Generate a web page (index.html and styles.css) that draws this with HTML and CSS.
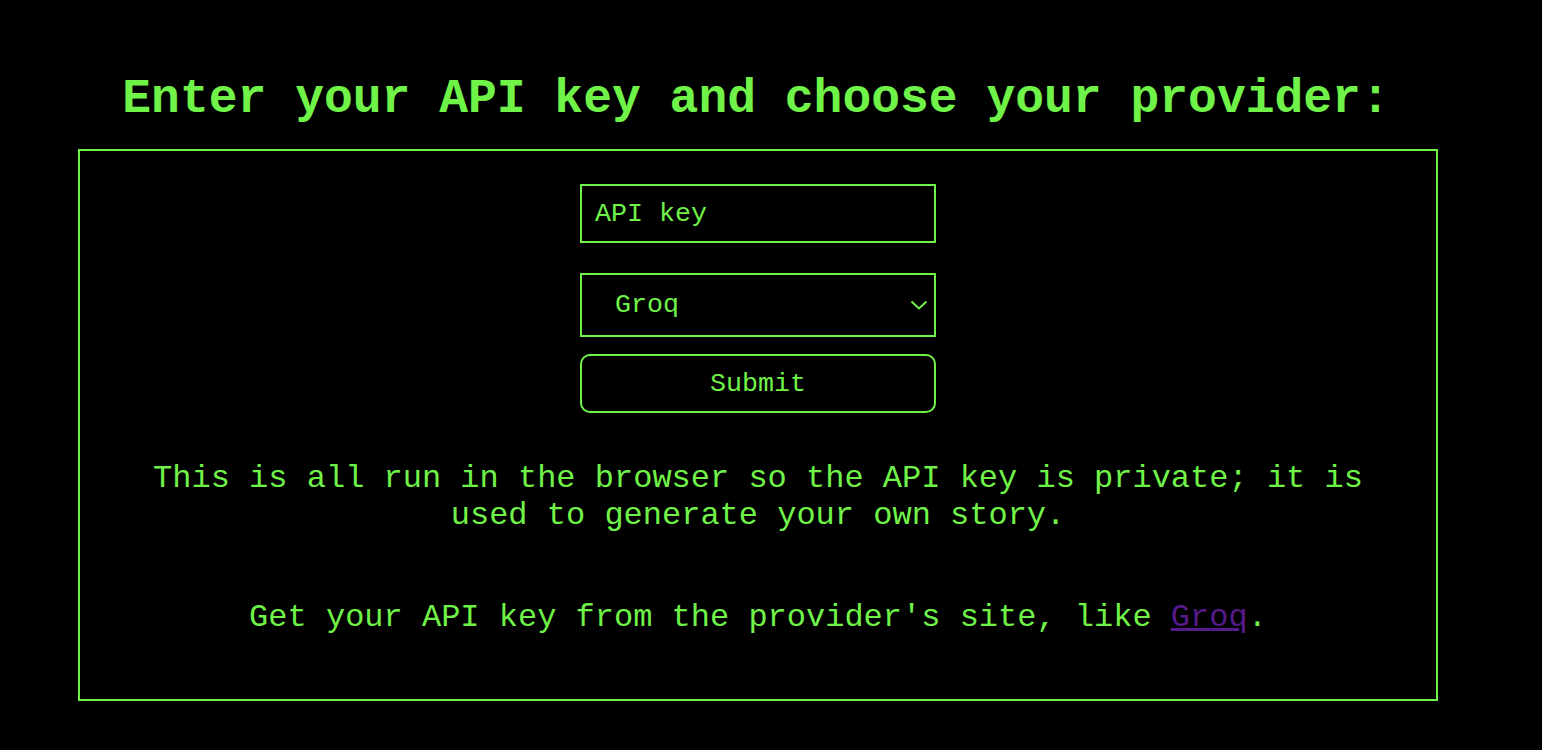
FILE: index.html
```html
<!DOCTYPE html>
<html lang="en">
<head>
<meta charset="utf-8">
<title>API key</title>
<link rel="stylesheet" href="styles.css">
</head>
<body>
  <h1 class="title">Enter your API key and choose your provider:</h1>
  <div class="panel">
    <form class="form">
      <input class="field" type="text" placeholder="API key">
      <div class="select-wrap">
        <select class="field select">
          <option>Groq</option>
        </select>
        <svg class="chevron" width="18" height="10" viewBox="0 0 18 10" aria-hidden="true">
          <path d="M1.5 1.5 L9 8.5 L16.5 1.5" fill="none" stroke="currentColor" stroke-width="2"/>
        </svg>
      </div>
      <button class="submit" type="button">Submit</button>
    </form>
    <p class="note">This is all run in the browser so the API key is private; it is used to generate your own story.</p>
    <p class="note note-second">Get your API key from the provider's site, like <a class="link" href="#">Groq</a>.</p>
  </div>
</body>
</html>
```
FILE: styles.css
```css
html, body {
  background: #000;
}
body {
  margin: 0;
  color: rgb(112, 243, 72);
  font-family: "Liberation Mono", "Courier New", monospace;
}
.title {
  margin: 72px 0 23px 78px;
  width: 1360px;
  text-align: center;
  font-size: 48px;
  font-weight: bold;
  line-height: normal;
  padding-right: 4px;
  box-sizing: border-box;
}
.panel {
  margin-left: 78px;
  width: 1360px;
  box-sizing: border-box;
  border: 2px solid rgb(112, 243, 72);
  padding: 33px 40px 63px;
}
.form {
  display: flex;
  flex-direction: column;
  align-items: center;
}
.field {
  box-sizing: border-box;
  width: 356px;
  height: 59px;
  background: #000;
  color: rgb(112, 243, 72);
  border: 2px solid rgb(112, 243, 72);
  border-radius: 0;
  font-family: "Liberation Mono", "Courier New", monospace;
  font-size: 26.67px;
  padding: 0 13px;
  outline: none;
}
.field::placeholder {
  color: rgb(112, 243, 72);
  opacity: 1;
}
.select-wrap {
  position: relative;
  margin-top: 30px;
  color: rgb(112, 243, 72);
}
.select {
  display: block;
  height: 64px;
  appearance: none;
  -webkit-appearance: none;
  padding: 0 32px 0 33px;
}
.chevron {
  position: absolute;
  right: 8px;
  top: 27px;
  pointer-events: none;
}
.submit {
  box-sizing: border-box;
  margin-top: 17px;
  width: 356px;
  height: 59px;
  background: #000;
  color: rgb(112, 243, 72);
  border: 2px solid rgb(112, 243, 72);
  border-radius: 10px;
  font-family: "Liberation Mono", "Courier New", monospace;
  font-size: 26.67px;
  cursor: pointer;
}
.note {
  margin: 47px 0 0;
  text-align: center;
  font-size: 32px;
  line-height: normal;
}
.note-second {
  margin-top: 65px;
}
.link {
  color: #551a8b;
}
```
